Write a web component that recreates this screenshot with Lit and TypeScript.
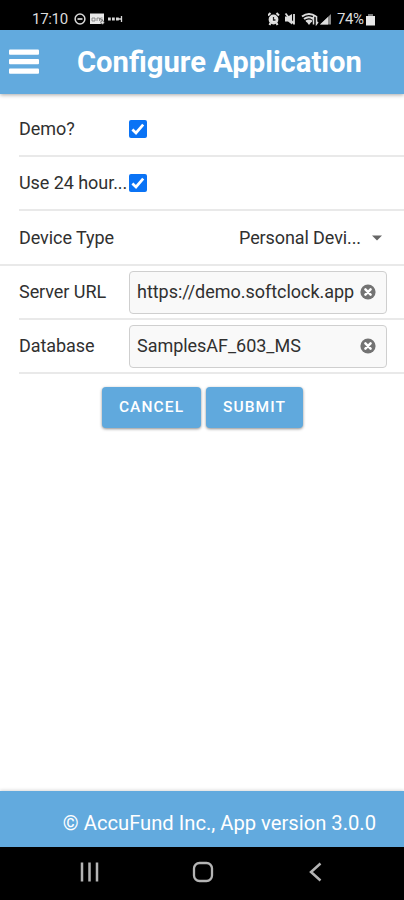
import { LitElement, html, css, svg } from "lit";
import { customElement } from "lit/decorators.js";

const check = svg`<rect width="18" height="18" rx="2" fill="#0a73f5"/><path d="M3.4 9.5 7 13 14.2 4.6" fill="none" stroke="#fff" stroke-width="2.7"/>`;
const clear = svg`<circle cx="8" cy="8" r="7.6" fill="#737373"/><path d="M5.4 5.4l5.2 5.2M10.6 5.4l-5.2 5.2" stroke="#fff" stroke-width="2.5" stroke-linecap="round"/>`;

@customElement("app-root")
export class AppRoot extends LitElement {
  static styles = css`
    :host {
      display: flex;
      flex-direction: column;
      width: 404px;
      height: 900px;
      overflow: hidden;
      background: #fff;
      color: #303030;
      font-family: Roboto, sans-serif;
      font-size: 18px;
      line-height: 24px;
    }
    * { box-sizing: border-box; }
    svg { display: block; flex: none; }
    .status {
      display: flex;
      align-items: center;
      height: 30px;
      padding: 8px 29px 0 32px;
      background: #000;
      color: #dcdcdc;
      font-size: 15px;
      line-height: 22px;
      flex: none;
    }
    .time { width: 42px; letter-spacing: -0.3px; }
    .gap { flex: 1; }
    .battery { width: 29px; letter-spacing: -0.4px; }
    .header {
      display: flex;
      align-items: center;
      height: 64px;
      padding: 0 0 1px 9px;
      background: #62aade;
      box-shadow: 0 1px 4px rgba(0, 0, 0, 0.35);
      color: #fff;
      flex: none;
    }
    .title {
      margin: 0 0 0 38px;
      font-size: 29.2px;
      line-height: 40px;
      font-weight: 700;
      white-space: nowrap;
    }
    .form { padding-top: 8px; flex: 1; }
    .row {
      display: flex;
      align-items: center;
      height: 54px;
      margin-left: 19px;
      border-bottom: 2px solid #e9e9e9;
    }
    .row.first { height: 55px; }
    .row.wide { margin-left: 0; padding-left: 19px; height: 55px; }
    .label {
      width: 110px;
      flex: none;
      letter-spacing: -0.06px;
      white-space: nowrap;
    }
    .choice { margin-left: 110px; width: 123px; letter-spacing: -0.1px; white-space: nowrap; }
    .caret { margin-left: 9px; }
    .field {
      display: flex;
      align-items: center;
      justify-content: space-between;
      width: 258px;
      height: 43px;
      padding: 0 10px 0 7px;
      border: 1px solid #cfcfcf;
      border-radius: 4px;
      background: #f9f9f9;
      letter-spacing: -0.03px;
      white-space: nowrap;
    }
    .actions { display: flex; gap: 5px; padding: 13px 0 0 102px; }
    .button {
      width: 99px;
      height: 41px;
      padding: 0 0 1px;
      border: 0;
      border-radius: 4px;
      background: #60a9dd;
      box-shadow: 0 1px 3px rgba(0, 0, 0, 0.45);
      color: #fff;
      font: 500 15.5px/40px Roboto, sans-serif;
      letter-spacing: 1.1px;
    }
    .button.submit { width: 97px; }
    .footer {
      height: 56px;
      padding: 4px 28px 0 0;
      background: #62aade;
      box-shadow: 0 -1px 3px rgba(0, 0, 0, 0.15);
      color: #fff;
      font-size: 20.2px;
      line-height: 56px;
      text-align: right;
      white-space: nowrap;
      flex: none;
    }
    .nav {
      display: flex;
      align-items: center;
      height: 53px;
      padding: 0 82px 3px 79px;
      justify-content: space-between;
      background: #000;
      flex: none;
    }
    .home { margin-right: 3px; }
  `;

  render() {
    return html`
      <div class="status">
        <span class="time">17:10</span>
        <svg width="52" height="14" viewBox="0 0 52 14" fill="none" stroke="#d8d8d8">
          <circle cx="6" cy="7" r="4.900" stroke-width="1.500"/><path d="M3.500 7h5" stroke-width="1.700"/>
          <path d="M16 1.500h14v7.500l-3 3H16z" fill="#e8e8e8" stroke="none"/>
          <path d="M21 6h-3v3h3zM23 9V6h2.500v3M28.500 6h-2v1.500h2V9h-2" stroke="#777" stroke-width=".8"/>
          <circle cx="28.500" cy="10.500" r="1.700" fill="#e8e8e8" stroke="#444" stroke-width=".7"/>
          <path d="M34 7h2.800M38 7h2.800M42 7h2.800" stroke-width="2.800"/><path d="M44 7h4M47.500 4v6" stroke-width="1.300"/>
        </svg>
        <span class="gap"></span>
        <svg width="69" height="14" viewBox="0 0 69 14" fill="none" stroke="#ddd">
          <circle cx="5.500" cy="7.500" r="3.700" fill="#eee" stroke-width="2.400"/>
          <path d="M0 3.500 2.500 1M11 3.500 8.500 1M2.500 11l-1 2M8.500 11l1 2" stroke-width="2"/><path d="M5.500 5V8H7.500" stroke="#222" stroke-width="1.300"/>
          <path d="M17 4.500h3l4-2.500v10.500L20 9.500h-3z" fill="#ddd" stroke="none"/>
          <path d="M17.500 1.500 26 12M26 2v10.500" stroke-width="1.800"/>
          <path d="M34 4.500q7-5 14 0M36 7q5-3.500 9 0M38 9.500q3-2 6 0" stroke-width="2.100"/><path d="M38 9h6l-3 4z" fill="#ddd" stroke="none"/>
          <path d="M45.500 12.500V5l-1.500 2M48.500 4v8l1.500-2" stroke-width="1.500"/>
          <path d="M52 12.500 63 2v10.500z" fill="#888" stroke="none"/><path d="M52 12.500 60 5v7.500z" fill="#ddd" stroke="none"/>
        </svg>
        <span class="battery">74%</span>
        <svg width="9" height="13" viewBox="0 0 9 13"><path d="M2.500 1h4v2H9v9.500H0V3h2.500z" fill="#e8e8e8"/><path d="M2.500 1h4v2h-4z" fill="#777"/></svg>
      </div>
      <header class="header">
        <svg width="30" height="26" viewBox="0 0 30 26" fill="#fff"><rect y=".5" width="30" height="5.300" rx="1"/><rect y="10" width="30" height="5.300" rx="1"/><rect y="19.500" width="30" height="5.300" rx="1"/></svg>
        <h1 class="title">Configure Application</h1>
      </header>
      <main class="form">
        <div class="row first"><span class="label">Demo?</span><svg width="18" height="18">${check}</svg></div>
        <div class="row"><span class="label">Use 24 hour...</span><svg width="18" height="18">${check}</svg></div>
        <div class="row wide"><span class="label">Device Type</span><span class="choice">Personal Devi...</span>
          <svg class="caret" width="12" height="6" viewBox="0 0 12 6"><path d="M1 .5h10L6 5.500z" fill="#666"/></svg></div>
        <div class="row"><span class="label">Server URL</span><div class="field"><span>https://demo.softclock.app</span><svg width="16" height="16">${clear}</svg></div></div>
        <div class="row"><span class="label">Database</span><div class="field"><span>SamplesAF_603_MS</span><svg width="16" height="16">${clear}</svg></div></div>
        <div class="actions"><button class="button">CANCEL</button><button class="button submit">SUBMIT</button></div>
      </main>
      <footer class="footer">© AccuFund Inc., App version 3.0.0</footer>
      <nav class="nav">
        <svg width="21" height="20" viewBox="0 0 21 20" stroke="#b4b4b4" stroke-width="2.500"><path d="M3 .5v19M10.500 .5v19M18 .5v19"/></svg>
        <svg class="home" width="22" height="22" viewBox="0 0 22 22"><rect x="2" y="2" width="18" height="18" rx="5.500" fill="none" stroke="#b4b4b4" stroke-width="2.300"/></svg>
        <svg width="14" height="20" viewBox="0 0 14 20"><path d="M12.500 1.500 3 10l9.500 8.500" fill="none" stroke="#b4b4b4" stroke-width="2.500"/></svg>
      </nav>
    `;
  }
}
